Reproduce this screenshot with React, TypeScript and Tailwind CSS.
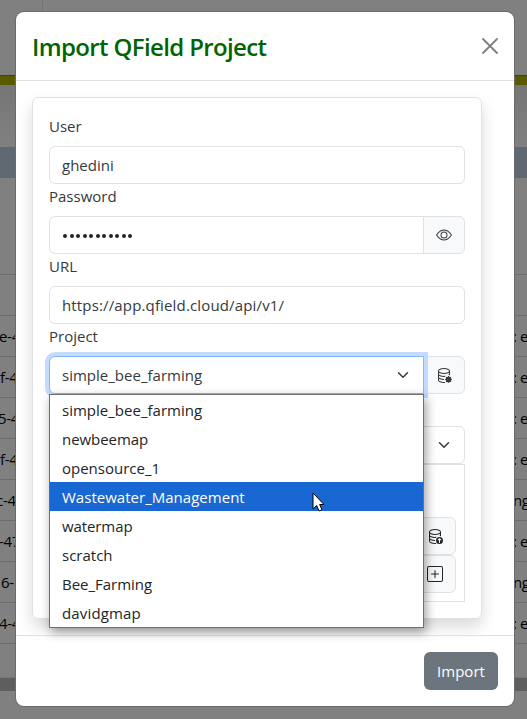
import { BsDatabaseGear, BsDatabaseUp, BsEye, BsPlusSquare } from "react-icons/bs";

const rows = [
  { left: "e-4", right: ": e", shift: "-ml-px" },
  { left: "f-4", right: ": e", shift: "ml-0" },
  { left: "5-4", right: ": e", shift: "-ml-[2px]" },
  { left: "f-4", right: ": e", shift: "ml-0" },
  { left: "c-4", right: "ng", shift: "-ml-[4px]" },
  { left: "-47", right: ": e", shift: "-ml-px" },
  { left: "6-", right: "ng", shift: "ml-px" },
  { left: "4-4", right: ": e", shift: "-ml-px" },
];

const options = [
  { name: "simple_bee_farming", tracking: "tracking-[0.01px]" },
  { name: "newbeemap", tracking: "tracking-[-0.05px]" },
  { name: "opensource_1", tracking: "tracking-[0px]" },
  { name: "Wastewater_Management", tracking: "tracking-[0.02px]" },
  { name: "watermap", tracking: "tracking-[-0.1px]" },
  { name: "scratch", tracking: "tracking-[0px]" },
  { name: "Bee_Farming", tracking: "tracking-[-0.02px]" },
  { name: "davidgmap", tracking: "tracking-[0.15px]" },
];

function Chevron() {
  return (
    <svg viewBox="0 0 16 16" className="h-3 w-4 shrink-0" fill="none" stroke="#343a40" strokeWidth="2" strokeLinecap="round" strokeLinejoin="round">
      <path d="m2 5 6 6 6-6" />
    </svg>
  );
}

function Label({ children }: { children: string }) {
  return <label className="mb-2 block h-6 leading-[24px]">{children}</label>;
}

function Page() {
  return (
    <div className="h-[719px] w-full bg-[#808080] text-black">
      <div className="ml-[42px] h-[75px] border-l border-[#747474]" />
      <div className="h-[10px] border-t border-[#454500] bg-[#5a5a00]" />
      <div className="h-[62px] bg-linear-to-b from-[#767676] to-[#808080]" />
      <div className="h-[31px] bg-[#606972]" />
      <div className="h-[97px] border-b border-[#6c6c6c]" />
      <div className="h-[41px] border-b border-[#6c6c6c]" />
      {rows.map((row, i) => (
        <div key={i} className="flex h-[41px] items-center justify-between overflow-hidden border-b border-[#6c6c6c] leading-6">
          <span className={`whitespace-nowrap tracking-[-0.3px] ${row.shift}`}>{row.left}</span>
          <span className="w-[14px] whitespace-nowrap tracking-[-0.4px]">{row.right}</span>
        </div>
      ))}
      <div className="h-[33px]" />
      <div className="h-[14px] border-t border-[#777] bg-[#5e5e5e]" />
    </div>
  );
}

function ProjectMenu() {
  return (
    <ul className="absolute top-[38px] left-0 z-10 w-[375px] border border-[#707070] bg-white text-[#212529] shadow-[2px_4px_10px_rgba(0,0,0,0.38)]">
      {options.map((o, i) => (
        <li key={o.name} className={`h-[29px] px-3 leading-[31px] ${o.tracking} ${i === 3 ? "bg-[#1967d2] text-white" : ""}`}>
          {o.name}
        </li>
      ))}
      <svg className="absolute top-[97px] left-[262px]" width="14" height="22" viewBox="0 0 14 22" fill="white" stroke="black" strokeWidth="1">
        <path d="M1 1v16l3.7-3.5L7 19l3-1.3-2.4-5.2H12z" />
      </svg>
    </ul>
  );
}

const addon = "flex items-center justify-center border border-[#dee2e6] bg-[#f8f9fa]";

export default function App() {
  return (
    <div className="relative h-[719px] w-[527px] overflow-hidden font-['Open_Sans','Noto_Sans',sans-serif] text-[15px] text-[#343a40]">
      <Page />
      <div className="absolute top-3 left-4 flex h-[694px] w-[498px] flex-col rounded-lg bg-white shadow-[0_0_0_1px_#6b6b6b]">
        <header className="flex h-[69px] items-center justify-between border-b border-[#dee2e6] px-4">
          <h1 className="pt-px text-2xl font-semibold tracking-[-0.63px] text-[#006400]">Import QField Project</h1>
          <svg className="mb-[1px]" width="16" height="16" viewBox="0 0 16 16" stroke="#7f7f7f" strokeWidth="1.8" strokeLinecap="round">
            <path d="m1 1 14 14M15 1 1 15" />
          </svg>
        </header>
        <main className="h-[554px] p-4">
          <div className="h-[522px] w-[450px] rounded-md border border-[#dee2e6] p-4 shadow-[0_8px_16px_rgba(0,0,0,0.15)]">
            <Label>User</Label>
            <div className="h-[38px] rounded-md border border-[#dee2e6] px-3 leading-[36px]">ghedini</div>
            <Label>Password</Label>
            <div className="flex h-[38px]">
              <div className="flex w-[375px] items-center gap-[2.55px] rounded-l-md border border-[#dee2e6] pt-0.5 pl-[13px]">
                {Array.from({ length: 11 }, (_, i) => (
                  <span key={i} className="size-1 rounded-full bg-[#212529]" />
                ))}
              </div>
              <button className={`${addon} -ml-px w-[42px] rounded-r-md`}>
                <BsEye size={16} />
              </button>
            </div>
            <Label>URL</Label>
            <div className="h-[38px] rounded-md border border-[#dee2e6] px-3 leading-[36px] tracking-[0.15px]">https://app.qfield.cloud/api/v1/</div>
            <Label>Project</Label>
            <div className="relative flex h-[38px]">
              <div className="z-[1] flex w-[375px] items-center justify-between rounded-l-md border border-[#86b7fe] bg-white pr-3 pl-3 tracking-[0.01px] shadow-[0_0_0_4px_#c2dbff]">
                <span>simple_bee_farming</span>
                <Chevron />
              </div>
              <button className={`${addon} -ml-px w-[42px] rounded-r-md`}>
                <BsDatabaseGear size={16} />
              </button>
              <ProjectMenu />
            </div>
            <div className="mt-8 flex h-[38px] items-center justify-end rounded-md border border-[#dee2e6] px-3">
              <Chevron />
            </div>
            <div className="flex h-[138px] flex-col items-end justify-end border border-[#dee2e6] p-2 text-[#212529]">
              <button className={`${addon} h-[38px] w-[42px] rounded-md`}>
                <BsDatabaseUp size={16} />
              </button>
              <button className={`${addon} h-[38px] w-[42px] rounded-md`}>
                <BsPlusSquare size={16} />
              </button>
            </div>
          </div>
        </main>
        <footer className="flex flex-1 items-center justify-end border-t border-[#dee2e6] px-4">
          <button className="h-[38px] w-[74px] rounded-md bg-[#6c757d] text-white">Import</button>
        </footer>
      </div>
    </div>
  );
}
